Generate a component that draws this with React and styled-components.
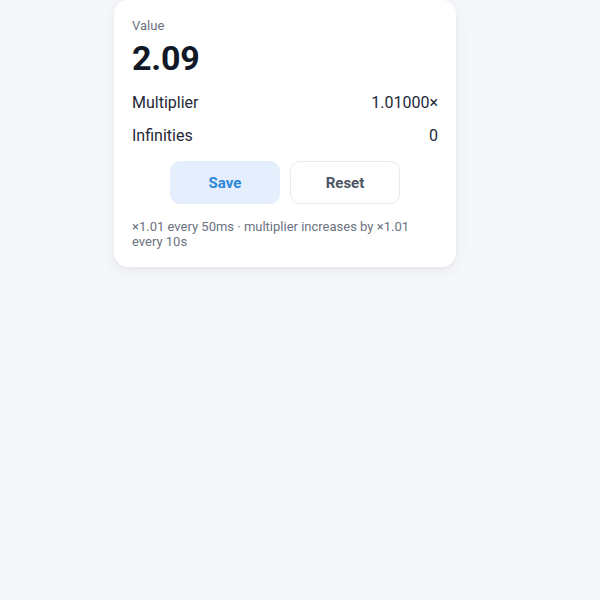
import styled, { createGlobalStyle } from 'styled-components';

const GlobalStyle = createGlobalStyle`
  html, body {
    margin: 0;
    padding: 0;
    background: #f5f7fa;
    font-family: Roboto, "Liberation Sans", Arial, sans-serif;
  }
`;

const Page = styled.div`
  min-height: 600px;
  padding-left: 114px;
  box-sizing: border-box;
`;

const Card = styled.div`
  width: 342px;
  box-sizing: border-box;
  padding: 18px 18px 18px;
  background: #ffffff;
  border-radius: 14px;
  box-shadow: 0 4px 16px rgba(15, 23, 42, 0.06), 0 1px 3px rgba(15, 23, 42, 0.04);
`;

const Label = styled.div`
  font-size: 13px;
  color: #6b7280;
`;

const BigValue = styled.div`
  font-size: 34px;
  font-weight: 700;
  color: #111827;
  margin-top: 5px;
  letter-spacing: -0.2px;
`;

const Rows = styled.div`
  margin-top: 8px;
`;

const Row = styled.div`
  display: flex;
  justify-content: space-between;
  align-items: center;
  padding: 7px 0;
  font-size: 16px;
  line-height: 19px;
  color: #1f2937;
`;

const Actions = styled.div`
  display: flex;
  justify-content: center;
  gap: 10px;
  margin-top: 9px;
`;

const Button = styled.button`
  width: 110px;
  height: 43px;
  border-radius: 10px;
  font-family: inherit;
  font-size: 15px;
  font-weight: 700;
  cursor: pointer;
  border: 1px solid ${(props) => (props.$primary ? '#e5eefc' : '#e8ebef')};
  background: ${(props) => (props.$primary ? '#e5eefc' : '#ffffff')};
  color: ${(props) => (props.$primary ? '#2a86d8' : '#4b5563')};
`;

const Note = styled.p`
  margin: 16px 0 0;
  font-size: 13px;
  line-height: 14.5px;
  color: #6b7280;
`;

export default function App() {
  return (
    <Page>
      <GlobalStyle />
      <Card>
        <Label>Value</Label>
        <BigValue>2.09</BigValue>
        <Rows>
          <Row>
            <span>Multiplier</span>
            <span>1.01000×</span>
          </Row>
          <Row>
            <span>Infinities</span>
            <span>0</span>
          </Row>
        </Rows>
        <Actions>
          <Button $primary>Save</Button>
          <Button>Reset</Button>
        </Actions>
        <Note>×1.01 every 50ms · multiplier increases by ×1.01 every 10s</Note>
      </Card>
    </Page>
  );
}
